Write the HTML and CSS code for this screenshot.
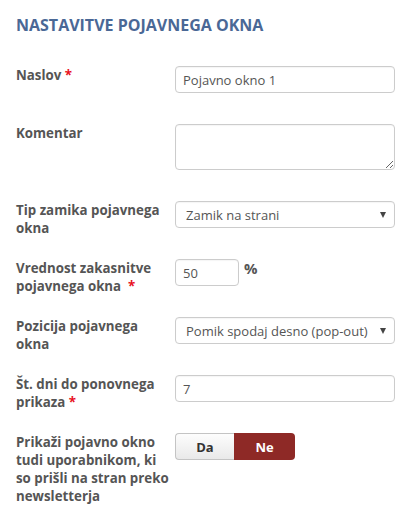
FILE: index.html
```html
<!DOCTYPE html>
<html>
<head>
<meta charset="utf-8">
<link rel="stylesheet" href="styles.css">
</head>
<body>
<div class="panel">
  <h2 class="title">NASTAVITVE POJAVNEGA OKNA</h2>
  <div class="form">
    <div class="row">
      <label class="lbl">Naslov <span class="req">*</span></label>
      <div class="field"><input class="ctl" type="text" value="Pojavno okno 1"></div>
    </div>
    <div class="row">
      <label class="lbl">Komentar</label>
      <div class="field"><textarea class="ctl area"></textarea></div>
    </div>
    <div class="row">
      <label class="lbl">Tip zamika pojavnega okna</label>
      <div class="field"><div class="sel"><select class="ctl"><option>Zamik na strani</option></select></div></div>
    </div>
    <div class="row">
      <label class="lbl">Vrednost zakasnitve pojavnega okna &nbsp;<span class="req">*</span></label>
      <div class="field inline"><input class="ctl short" type="text" value="50"><span class="pct">%</span></div>
    </div>
    <div class="row">
      <label class="lbl">Pozicija pojavnega okna</label>
      <div class="field"><div class="sel"><select class="ctl"><option>Pomik spodaj desno (pop-out)</option></select></div></div>
    </div>
    <div class="row">
      <label class="lbl">Št. dni do ponovnega prikaza <span class="req">*</span></label>
      <div class="field"><input class="ctl" type="text" value="7"></div>
    </div>
    <div class="row">
      <label class="lbl">Prikaži pojavno okno tudi uporabnikom, ki so prišli na stran preko newsletterja</label>
      <div class="field"><div class="toggle"><span class="opt off">Da</span><span class="opt on">Ne</span></div></div>
    </div>
  </div>
</div>
</body>
</html>
```
FILE: styles.css
```css
html, body { margin: 0; padding: 0; background: #fff; }
body { font-family: "Open Sans", "Liberation Sans", sans-serif; color: #555; }
.panel { padding: 14px 16px 0 16px; }
.title {
  margin: 0 0 30px 0;
  font-size: 16px;
  line-height: 22px;
  font-weight: 700;
  color: #4a6896;
  letter-spacing: 0;
}
.row { display: grid; grid-template-columns: 159px 220px; align-items: start; }
.lbl {
  font-size: 13.3px;
  font-weight: 700;
  line-height: 18px;
  color: #555;
  padding-right: 5px;
}
.req { color: #e8121e; }
.field { padding-bottom: 31px; }
.ctl {
  box-sizing: border-box;
  display: block;
  width: 220px;
  height: 27px;
  margin: 0;
  border: 1px solid #ccc;
  border-radius: 4px;
  padding: 0 7px;
  font-family: "Open Sans", "Liberation Sans", sans-serif;
  font-size: 13px;
  color: #555;
  background: #fff;
  box-shadow: inset 0 1px 1px rgba(0,0,0,0.04);
}
.area { height: 46px; resize: vertical; padding: 4px 7px; }
.sel { position: relative; width: 220px; }
.sel select { -webkit-appearance: none; appearance: none; padding-left: 10px; }
.sel::after {
  content: "";
  position: absolute;
  right: 9px;
  top: 11px;
  border-left: 3.5px solid transparent;
  border-right: 3.5px solid transparent;
  border-top: 6px solid #444;
}
.inline { display: flex; align-items: flex-start; }
.ctl.short { width: 64px; }
.pct { font-size: 15px; font-weight: 700; color: #555; margin-left: 5px; line-height: 20px; margin-top: -1px; }
.toggle { display: flex; width: 120px; height: 27px; }
.opt {
  box-sizing: border-box;
  display: flex;
  align-items: center;
  justify-content: center;
  font-size: 13px;
  font-weight: 700;
  height: 27px;
}
.off {
  width: 59px;
  color: #333;
  border: 1px solid #c4c4c4;
  border-right: none;
  border-radius: 4px 0 0 4px;
  background: linear-gradient(#fdfdfd, #e9e9e9);
}
.on {
  width: 61px;
  color: #fff;
  background: #8e2926;
  border-radius: 0 4px 4px 0;
}
```
